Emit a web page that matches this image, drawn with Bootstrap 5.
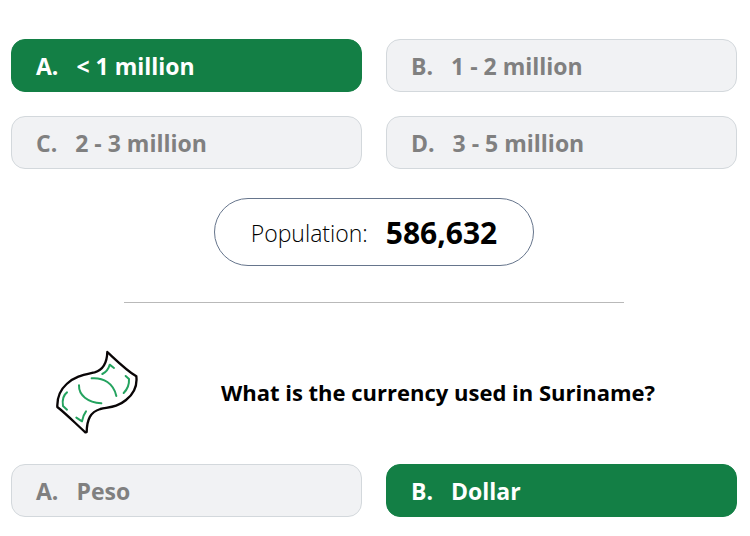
<!DOCTYPE html>
<html lang="en">
<head>
<meta charset="utf-8">
<meta name="viewport" content="width=device-width, initial-scale=1">
<title>Suriname quiz</title>
<link rel="stylesheet" href="https://cdn.jsdelivr.net/npm/bootstrap@5.3.0/dist/css/bootstrap.min.css">
<style>
  body { font-family: "Open Sans", "Noto Sans", sans-serif; background: #fff; color: #000; }
  .quiz { padding: 39px 13px 19px 11px; }
  .answers { gap: 24px; }
  .answer {
    flex: 1 1 40%;
    gap: 18px;
    padding: 10px 24px 8px;
    font-size: 23px;
    line-height: 33px;
    font-weight: 700;
    color: #808080;
    background: #f1f2f4;
    border: 1px solid #d3d8dc;
    border-radius: 14px;
  }
  .answer.correct, .answer.correct:hover { color: #fff; background: #137f45; border-color: #137f45; }
  .answer:hover { color: #808080; background: #f1f2f4; border-color: #d3d8dc; }
  .fact { margin-top: 29px; padding: 12px 36px 10px; gap: 18px; border: 1px solid #66758c; line-height: 44px; }
  .fact-label { font-size: 23px; font-weight: 300; color: #000; }
  .fact-value { font-size: 30px; font-weight: 700; }
  .divider { width: 69%; margin: 36px auto 47px; border-color: #b9b9b9; opacity: 1; }
  .question { margin-bottom: 30px; padding-left: 44px; }
  .question h2 { font-size: 22px; line-height: 32px; font-weight: 700; }
</style>
<script src="https://cdn.jsdelivr.net/npm/bootstrap@5.3.0/dist/js/bootstrap.bundle.min.js"></script>
</head>
<body>
<main class="quiz">
  <section class="answers d-flex flex-wrap" aria-label="Population answers">
    <button type="button" class="answer correct btn d-flex text-start"><span>A.</span><span>&lt; 1 million</span></button>
    <button type="button" class="answer btn d-flex text-start"><span>B.</span><span>1 - 2 million</span></button>
    <button type="button" class="answer btn d-flex text-start"><span>C.</span><span>2 - 3 million</span></button>
    <button type="button" class="answer btn d-flex text-start"><span>D.</span><span>3 - 5 million</span></button>
  </section>
  <div class="d-flex justify-content-center">
    <div class="fact d-flex align-items-center rounded-pill">
      <span class="fact-label">Population:</span><span class="fact-value">586,632</span>
    </div>
  </div>
  <hr class="divider">
  <section class="question d-flex align-items-center">
    <svg class="flex-shrink-0" width="84" height="84" viewBox="45 30 252 252" fill="none" stroke-linecap="round" stroke-linejoin="round" aria-hidden="true">
      <path stroke="#090506" stroke-width="7" d="M202 36C230 62 258 90 289 109C292 135 281 162 258 180C232 202 208 201 181 207C151 216 141 238 140 276L136 277C106 250 79 222 52 201C51 176 59 151 80 132C105 108 134 104 164 97C192 89 201 66 202 36Z"/>
      <path stroke="#24a35f" stroke-width="6" d="M187 102C198 96 206 86 209 74L222 84M257 108L267 117C268 134 262 148 251 159M155 115C190 112 221 130 229 168M117 136C116 166 143 187 184 190M81 157C69 166 66 180 69 198L81 209M138 214C131 223 128 232 126 244L109 233"/>
    </svg>
    <h2 class="flex-grow-1 text-center mb-0">What is the currency used in Suriname?</h2>
  </section>
  <section class="answers d-flex flex-wrap" aria-label="Currency answers">
    <button type="button" class="answer btn d-flex text-start"><span>A.</span><span>Peso</span></button>
    <button type="button" class="answer correct btn d-flex text-start"><span>B.</span><span>Dollar</span></button>
  </section>
</main>
</body>
</html>
